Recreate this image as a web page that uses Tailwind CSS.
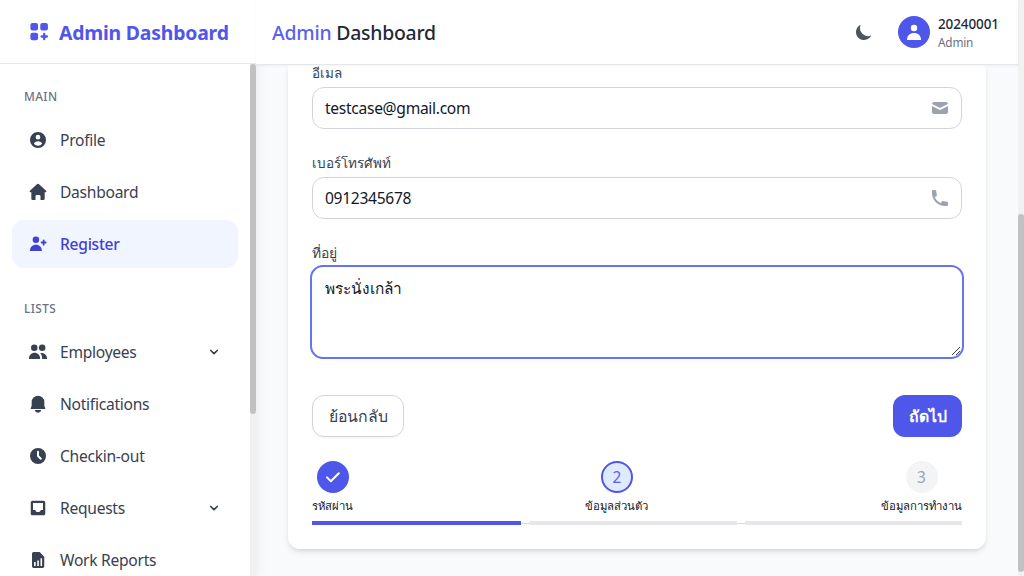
<!DOCTYPE html>
<html lang="th">
<head>
<meta charset="utf-8">
<title>Admin Dashboard</title>
<script src="https://cdn.jsdelivr.net/npm/@tailwindcss/browser@4"></script>
</head>
<body class="h-[576px] w-[1024px] overflow-hidden bg-[#f9fafb] font-['Noto_Sans','Open_Sans',sans-serif]">
<div class="flex h-full">
  <aside class="relative z-10 flex w-64 shrink-0 flex-col bg-white shadow-lg">
    <div class="flex h-16 items-center gap-2 border-b border-[#e5e7eb] pl-7 pt-0.5 text-[#4f56ea]">
      <svg class="size-[23px] -mt-0.5" viewBox="0 0 24 24" fill="currentColor"><rect x="2.500" y="3" width="8" height="8" rx="2.2"/><rect x="12.800" y="3" width="8" height="8" rx="2.2"/><rect x="2.500" y="13.200" width="8" height="8" rx="2.2"/><path d="M15.700 14.500a1.200 1.200 0 0 1 2.400 0V16h1.600a1.200 1.200 0 0 1 0 2.400h-1.600V20a1.200 1.200 0 0 1-2.400 0v-1.600h-1.500a1.200 1.200 0 0 1 0-2.400h1.500z"/></svg>
      <span class="text-[19.4px] font-bold leading-7 tracking-[-0.2px] whitespace-nowrap">Admin Dashboard</span>
    </div>
    <div class="flex min-h-0 flex-1">
      <nav class="w-[250px] overflow-hidden px-3 pt-6 text-[15.6px] tracking-[-0.27px] text-[#374151] [&_span]:pt-0.5">
        <h2 class="mb-3 pl-3 text-[11.8px] font-medium leading-4 tracking-[0.4px] text-[#6b7280]">MAIN</h2>
        <ul class="flex flex-col gap-1">
          <li class="flex h-12 items-center gap-3 px-4">
            <svg class="size-5" viewBox="0 0 24 24" fill="currentColor"><path fill-rule="evenodd" d="M12 2.400a9.600 9.600 0 1 0 0 19.200 9.600 9.600 0 0 0 0-19.200zm0 3.400a2.800 2.800 0 1 1 0 5.600 2.800 2.800 0 0 1 0-5.600zM7 16.600c.6-2 2.600-3.200 5-3.200s4.400 1.200 5 3.200c-1.300 1.500-3.100 2.200-5 2.200s-3.700-.7-5-2.200z"/></svg><span>Profile</span></li>
          <li class="flex h-12 items-center gap-3 px-4">
            <svg class="size-5" viewBox="0 0 24 24" fill="currentColor"><path d="M11 2.500a1.500 1.500 0 0 1 2 0l8.700 8c.7.700.3 1.700-.6 1.700H20V20a1.600 1.600 0 0 1-1.600 1.600H15V17a1.500 1.500 0 0 0-1.500-1.500h-3A1.500 1.500 0 0 0 9 17v4.600H5.600A1.600 1.600 0 0 1 4 20v-7.800H2.900c-.9 0-1.300-1-.6-1.700z"/></svg><span>Dashboard</span></li>
          <li class="flex h-12 items-center gap-3 rounded-xl bg-[#f0f5ff] px-4 font-medium text-[#4340d2]">
            <svg class="size-5" viewBox="0 0 24 24" fill="currentColor"><circle cx="9.500" cy="7" r="3.900"/><path d="M2.300 20.500c0-4.500 3-7.500 7.200-7.500s7.200 3 7.200 7.500zM17.700 7.600a1.100 1.100 0 0 1 2.200 0v1.500h1.300a1.100 1.100 0 0 1 0 2.200h-1.300v1.500a1.100 1.100 0 0 1-2.200 0v-1.500h-1.300a1.100 1.100 0 0 1 0-2.200h1.300z"/></svg><span>Register</span></li>
        </ul>
        <h2 class="mt-8 mb-3 pl-3 text-[11.8px] font-medium leading-4 tracking-[0.4px] text-[#6b7280]">LISTS</h2>
        <ul class="flex flex-col gap-1">
          <li class="flex h-12 items-center gap-3 px-4">
            <svg class="size-5" viewBox="0 0 24 24" fill="currentColor"><circle cx="7.500" cy="7" r="3.900"/><circle cx="17" cy="7" r="3.900"/><path d="M1.200 20.300c0-4.300 2.800-7.300 6.700-7.300s6.700 3 6.700 7.300zM14.600 13.200c5-.8 8.400 2.400 8.400 7.100h-6c0-2.800-.6-5.100-2.400-7.100z"/></svg><span>Employees</span>
            <svg class="ml-auto size-4" viewBox="0 0 16 16" fill="none" stroke="currentColor" stroke-width="1.700" stroke-linecap="round" stroke-linejoin="round"><path d="m4.800 6.500 3.200 3.200 3.200-3.200"/></svg></li>
          <li class="flex h-12 items-center gap-3 px-4">
            <svg class="size-5" viewBox="0 0 24 24" fill="currentColor"><path d="M12 2a7.600 7.600 0 0 0-7.600 7.600v4.600L3.300 17c-.3.600.1 1.100.7 1.100h16c.6 0 1-.5.700-1.100l-1.100-2.800V9.600A7.600 7.600 0 0 0 12 2zM8 19.300h8a4.100 4.100 0 0 1-8 0z"/></svg><span>Notifications</span></li>
          <li class="flex h-12 items-center gap-3 px-4">
            <svg class="size-5" viewBox="0 0 24 24" fill="currentColor"><path fill-rule="evenodd" d="M12 2.400a9.600 9.600 0 1 0 0 19.200 9.600 9.600 0 0 0 0-19.200zM10.800 7a1.200 1.200 0 0 1 2.400 0v4.500l3 3a1.200 1.200 0 0 1-1.700 1.700l-3.300-3.300a1.400 1.400 0 0 1-.4-1z"/></svg><span>Checkin-out</span></li>
          <li class="flex h-12 items-center gap-3 px-4">
            <svg class="size-5" viewBox="0 0 24 24" fill="currentColor"><path fill-rule="evenodd" d="M5.300 3.400h13.400a2 2 0 0 1 2 2v13.400a2 2 0 0 1-2 2H5.300a2 2 0 0 1-2-2V5.400a2 2 0 0 1 2-2zM6 6v8.500h2.300c.7 0 1 2.300 2.200 2.300h3c1.200 0 1.500-2.300 2.200-2.300H18V6z"/></svg><span>Requests</span>
            <svg class="ml-auto size-4" viewBox="0 0 16 16" fill="none" stroke="currentColor" stroke-width="1.700" stroke-linecap="round" stroke-linejoin="round"><path d="m4.800 6.500 3.200 3.200 3.200-3.200"/></svg></li>
          <li class="flex h-12 items-center gap-3 px-4">
            <svg class="size-5" viewBox="0 0 24 24" fill="currentColor"><path fill-rule="evenodd" d="M6.800 2.300H14l5.500 5.700v11.600a2 2 0 0 1-2 2H6.800a2 2 0 0 1-2-2V4.300a2 2 0 0 1 2-2zM7.300 14.500v4.600h1.900v-4.600zm3.800-2v6.600H13v-6.600zm3.900-2.500v9.100h1.900V10z"/></svg><span>Work Reports</span></li>
        </ul>
      </nav>
      <div class="w-1.5 bg-[#f1f1f1]"><div class="h-[350px] rounded-[3px] bg-[#c1c1c1]"></div></div>
    </div>
  </aside>

  <div class="flex min-w-0 flex-1 flex-col">
    <header class="relative z-20 flex h-[65px] shrink-0 items-center border-b border-[#e5e7eb] bg-white px-4 pb-px shadow-xs">
      <h1 class="mt-0.5 text-[19.400px] font-medium leading-7 tracking-[-0.22px] whitespace-nowrap text-[#1f2937]"><span class="text-[#5a5ff0]">Admin</span> Dashboard</h1>
      <svg class="ml-auto size-5 text-[#4b5563]" viewBox="0 0 20 20" fill="currentColor"><path d="M17.293 13.293A8 8 0 0 1 6.707 2.707a8.001 8.001 0 1 0 10.586 10.586z"/></svg>
      <div class="ml-6 flex size-8 items-center justify-center rounded-full bg-[#4f56ea] text-white">
        <svg class="size-5" viewBox="0 0 20 20" fill="currentColor"><circle cx="10" cy="6" r="3.200"/><path d="M3 18c0-4.500 3-7 7-7s7 2.500 7 7z"/></svg>
      </div>
      <div class="ml-2 w-[64px] whitespace-nowrap">
        <div class="pt-px text-[13.5px] font-medium leading-5 tracking-[-0.1px] text-[#1f2937]">20240001</div>
        <div class="text-[11.800px] leading-4 tracking-[-0.2px] text-[#6b7280]">Admin</div>
      </div>
    </header>
    <main class="min-h-0 flex-1 px-8">
      <section class="h-[484px] rounded-b-xl bg-white px-6 shadow-md">
        <div class="h-[22px] overflow-hidden text-[13.500px] leading-4 text-[#374151]">อีเมล</div>
        <div class="flex h-[42px] items-center justify-between rounded-xl border border-[#d1d5db] pr-[11px] pl-3 text-[15.600px] tracking-[-0.3px] text-[#111827]">
          <span class="pt-0.5">testcase@gmail.com</span>
          <svg class="size-5 text-[#9ca3af]" viewBox="0 0 20 20" fill="currentColor"><path d="M2.003 5.884 10 9.882l7.997-3.998A2 2 0 0 0 16 4H4a2 2 0 0 0-1.997 1.884z"/><path d="m18 8.118-8 4-8-4V14a2 2 0 0 0 2 2h12a2 2 0 0 0 2-2V8.118z"/></svg>
        </div>
        <div class="mt-6 h-6 text-[13.500px] leading-5 text-[#374151]">เบอร์โทรศัพท์</div>
        <div class="flex h-[42px] items-center justify-between rounded-xl border border-[#d1d5db] pr-[11px] pl-3 text-[15.600px] tracking-[-0.3px] text-[#111827]">
          <span class="pt-0.5">0912345678</span>
          <svg class="size-5 text-[#9ca3af]" viewBox="0 0 20 20" fill="currentColor"><path d="M2 3a1 1 0 0 1 1-1h2.153a1 1 0 0 1 .986.836l.74 4.435a1 1 0 0 1-.54 1.060l-1.548.773a11.037 11.037 0 0 0 6.105 6.105l.774-1.548a1 1 0 0 1 1.059-.54l4.435.74a1 1 0 0 1 .836.986V17a1 1 0 0 1-1 1h-2C7.820 18 2 12.180 2 5V3z"/></svg>
        </div>
        <div class="mt-6 h-[22px] text-[13.900px] leading-5 text-[#374151]">ที่อยู่</div>
        <div class="-mx-0.5 flex h-[94px] rounded-[13px] border-2 border-[#6474f2] px-[13px] pt-2.5">
          <span class="flex-1 text-[15.400px] leading-6 text-[#111827]">พระนั่งเกล้า</span>
          <svg class="-mr-3 mb-px size-2.5 self-end" viewBox="0 0 10 10" fill="none" stroke="#444" stroke-width="1"><path d="M1 9 9 1M5 9 9 5"/></svg>
        </div>
        <div class="mt-9 flex justify-between text-[15.800px]">
          <div class="flex h-[42px] w-[92px] items-center justify-center rounded-xl border border-[#d1d5db] pt-0.5 whitespace-nowrap text-[#374151] shadow-xs">ย้อนกลับ</div>
          <div class="flex h-[42px] w-[69px] items-center justify-center rounded-xl bg-[#4f56ea] pt-px font-semibold whitespace-nowrap text-white">ถัดไป</div>
        </div>
        <div class="mt-6 flex justify-between text-[11.350px] leading-4 whitespace-nowrap text-[#111827]">
          <div class="flex w-[42px] flex-col items-center gap-[5px]">
            <div class="flex size-8 items-center justify-center rounded-full bg-[#4f56ea]"><svg class="size-4" viewBox="0 0 16 16" fill="none" stroke="white" stroke-width="2" stroke-linecap="round" stroke-linejoin="round"><path d="m2 8.400 3.800 3.800 8-8"/></svg></div>
            <span class="-ml-px">รหัสผ่าน</span>
          </div>
          <div class="-ml-0.5 flex w-[64px] flex-col items-center gap-[5px]">
            <div class="flex size-8 items-center justify-center rounded-full border-2 border-[#4f56ea] bg-[#dfe9ff] pt-0.5 pl-px text-[15.400px] text-[#5a60ec]">2</div>
            <span>ข้อมูลส่วนตัว</span>
          </div>
          <div class="flex w-[81px] flex-col items-center gap-[5px]">
            <div class="flex size-8 items-center justify-center rounded-full bg-[#f3f4f6] pt-0.5 text-[15.400px] text-[#9ca3af]">3</div>
            <span>ข้อมูลการทำงาน</span>
          </div>
        </div>
        <div class="mt-[7px] flex h-1 items-center">
          <div class="h-1 w-[209px] bg-[#4f56ea]"></div><div class="h-px w-2 bg-[#d8dae0]"></div>
          <div class="h-1 w-[208px] bg-[#e5e7eb]"></div><div class="h-px w-2 bg-[#d8dae0]"></div>
          <div class="h-1 flex-1 bg-[#e5e7eb]"></div>
        </div>
      </section>
    </main>
  </div>
  <div class="w-1.5 shrink-0 bg-[#f1f1f1] pt-[214px]"><div class="h-[358px] rounded-[3px] bg-[#c1c1c1]"></div></div>
</div>
</body>
</html>
